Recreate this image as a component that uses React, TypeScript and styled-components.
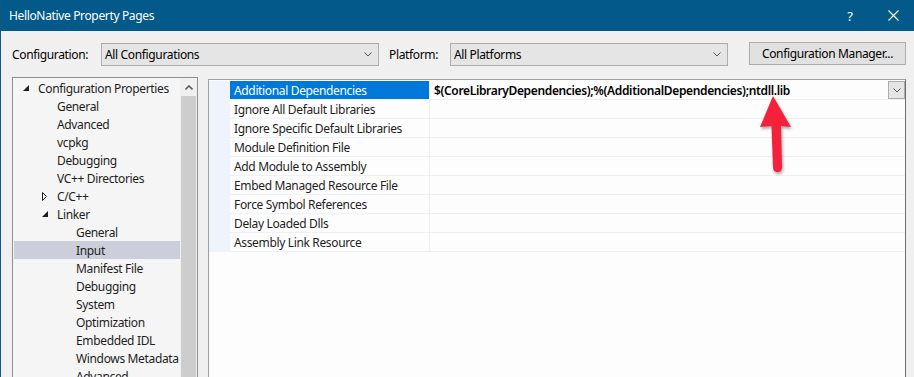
import styled, { createGlobalStyle } from 'styled-components'

const GlobalStyle = createGlobalStyle`
  body {
    margin: 0;
    background: #f0f0f0;
  }
`

type TreeItem = {
  label: string
  level: number
  expander?: 'open' | 'closed'
  selected?: boolean
}

const treeItems: TreeItem[] = [
  { label: 'Configuration Properties', level: 0, expander: 'open' },
  { label: 'General', level: 1 },
  { label: 'Advanced', level: 1 },
  { label: 'vcpkg', level: 1 },
  { label: 'Debugging', level: 1 },
  { label: 'VC++ Directories', level: 1 },
  { label: 'C/C++', level: 1, expander: 'closed' },
  { label: 'Linker', level: 1, expander: 'open' },
  { label: 'General', level: 2 },
  { label: 'Input', level: 2, selected: true },
  { label: 'Manifest File', level: 2 },
  { label: 'Debugging', level: 2 },
  { label: 'System', level: 2 },
  { label: 'Optimization', level: 2 },
  { label: 'Embedded IDL', level: 2 },
  { label: 'Windows Metadata', level: 2 },
  { label: 'Advanced', level: 2 },
]

const properties = [
  'Additional Dependencies',
  'Ignore All Default Libraries',
  'Ignore Specific Default Libraries',
  'Module Definition File',
  'Add Module to Assembly',
  'Embed Managed Resource File',
  'Force Symbol References',
  'Delay Loaded Dlls',
  'Assembly Link Resource',
]

const Chevron = ({ up }: { up?: boolean }) => (
  <svg width="8" height="5" viewBox="0 0 8 5">
    <path
      d={up ? 'M0.5 4.5 L4 1 L7.5 4.5' : 'M0.5 0.5 L4 4 L7.5 0.5'}
      fill="none"
      stroke={up ? '#606060' : '#555'}
      strokeWidth={up ? 1.6 : 1}
    />
  </svg>
)

const Expander = ({ kind }: { kind: 'open' | 'closed' }) =>
  kind === 'open' ? (
    <svg width="6" height="6" viewBox="0 0 6 6">
      <path d="M0 6 L6 6 L6 0 Z" fill="#1e1e1e" />
    </svg>
  ) : (
    <svg width="5" height="9" viewBox="0 0 5 9">
      <path d="M0.5 0.5 L4.5 4.5 L0.5 8.5 Z" fill="none" stroke="#1e1e1e" />
    </svg>
  )

const RedArrow = () => (
  <ArrowSvg width="50" height="92" viewBox="0 0 50 92">
    <path
      d="M23 7 L41 38 L31 37 L32 78 Q32 83 27.5 83 Q23 83 23 78 L21.5 37 L10 38 Z"
      fill="#f5213b"
    />
  </ArrowSvg>
)

export default function App() {
  return (
    <>
      <GlobalStyle />
      <Window>
        <TitleBar>
          <Title>HelloNative Property Pages</Title>
          <CaptionButton $width={44}>?</CaptionButton>
          <CaptionButton $width={42}>
            <svg width="11" height="11" viewBox="0 0 11 11">
              <path d="M0.5 0.5 L10.5 10.5 M10.5 0.5 L0.5 10.5" stroke="#fff" strokeWidth="1.1" />
            </svg>
          </CaptionButton>
        </TitleBar>

        <Toolbar>
          <FieldLabel $width={89}>Configuration:</FieldLabel>
          <Combo>
            <span>All Configurations</span>
            <Chevron />
          </Combo>
          <FieldLabel $width={61} $gap={10}>Platform:</FieldLabel>
          <Combo>
            <span>All Platforms</span>
            <Chevron />
          </Combo>
          <ManagerButton>Configuration Manager...</ManagerButton>
        </Toolbar>

        <Content>
          <TreePanel>
            <TreeList>
              {treeItems.map((item, i) => (
                <TreeRow key={i} $level={item.level} $selected={item.selected}>
                  <ExpanderSlot>{item.expander && <Expander kind={item.expander} />}</ExpanderSlot>
                  {item.label}
                </TreeRow>
              ))}
            </TreeList>
            <ScrollBar>
              <ScrollArrow>
                <Chevron up />
              </ScrollArrow>
              <ScrollThumb />
            </ScrollBar>
          </TreePanel>

          <Grid>
            {properties.map((name, i) => (
              <GridRow key={name}>
                <Gutter />
                <NameCell $selected={i === 0}>{name}</NameCell>
                <ValueCell>
                  {i === 0 && (
                    <>
                      <span>$(CoreLibraryDependencies);%(AdditionalDependencies);ntdll.lib</span>
                      <DropButton>
                        <Chevron />
                      </DropButton>
                    </>
                  )}
                </ValueCell>
              </GridRow>
            ))}
            <RedArrow />
          </Grid>
        </Content>
      </Window>
    </>
  )
}

const Window = styled.div`
  width: 914px;
  height: 377px;
  overflow: hidden;
  box-sizing: border-box;
  background: #f0f0f0;
  border-left: 1px solid #0f5784;
  display: flex;
  flex-direction: column;
  font-family: 'Noto Sans', 'Open Sans', sans-serif;
  font-size: 12px;
  letter-spacing: -0.35px;
  color: #000;
`

const TitleBar = styled.div`
  height: 31px;
  flex-shrink: 0;
  display: flex;
  align-items: center;
  padding-left: 8px;
  background: #02598a;
  color: #fff;
`

const Title = styled.div`
  flex: 1;
`

const CaptionButton = styled.div<{ $width: number }>`
  width: ${(p) => p.$width}px;
  height: 31px;
  display: flex;
  align-items: center;
  justify-content: center;
  font-size: 13px;
`

const Toolbar = styled.div`
  display: flex;
  align-items: center;
  margin-top: 12px;
  height: 23px;
  padding: 0 8px 0 11px;
  flex-shrink: 0;
`

const FieldLabel = styled.div<{ $width: number; $gap?: number }>`
  width: ${(p) => p.$width}px;
  margin-left: ${(p) => p.$gap ?? 0}px;
`

const Combo = styled.div`
  width: 278px;
  height: 23px;
  box-sizing: border-box;
  display: flex;
  align-items: center;
  justify-content: space-between;
  padding: 0 6px 0 3px;
  background: #e5e5e5;
  border: 1px solid #adadad;
`

const ManagerButton = styled.div`
  margin-left: auto;
  margin-bottom: 2px;
  width: 157px;
  height: 23px;
  box-sizing: border-box;
  display: flex;
  align-items: center;
  justify-content: center;
  background: #e1e1e1;
  border: 1px solid #adadad;
`

const Content = styled.div`
  display: flex;
  align-items: flex-start;
  gap: 10px;
  margin-top: 11px;
  padding-left: 11px;
  height: 330px;
  flex-shrink: 0;
`

const TreePanel = styled.div`
  width: 186px;
  height: 330px;
  box-sizing: border-box;
  display: flex;
  border: 1px solid #8f8f8f;
  background: #f5f5f5;
`

const TreeList = styled.div`
  flex: 1;
  padding: 1px 0 0 1px;
  overflow: hidden;
`

const TreeRow = styled.div<{ $level: number; $selected?: boolean }>`
  height: 18px;
  display: flex;
  align-items: center;
  white-space: nowrap;
  padding-left: ${(p) => 5 + p.$level * 19}px;
  background: ${(p) => (p.$selected ? '#cccedb' : 'transparent')};
  color: #1e1e1e;
`

const ExpanderSlot = styled.div`
  width: 19px;
  flex-shrink: 0;
  display: flex;
  align-items: center;
  padding-left: 4px;
  box-sizing: border-box;
`

const ScrollBar = styled.div`
  width: 17px;
  display: flex;
  flex-direction: column;
  background: #f0f0f0;
`

const ScrollArrow = styled.div`
  height: 18px;
  display: flex;
  align-items: center;
  justify-content: center;
`

const ScrollThumb = styled.div`
  flex: 1;
  margin: 0 1px;
  background: #cdcdcd;
`

const Grid = styled.div`
  position: relative;
  width: 698px;
  height: 330px;
  margin-top: 2px;
  box-sizing: border-box;
  padding-top: 1px;
  border: 1px solid #a0a0a0;
  border-right-color: #6d6d6d;
  background: #fdfdfd;
`

const GridRow = styled.div`
  display: flex;
  height: 19px;
`

const Gutter = styled.div`
  width: 21px;
  background: #eef3fc;
`

const NameCell = styled.div<{ $selected?: boolean }>`
  width: 200px;
  box-sizing: border-box;
  display: flex;
  align-items: center;
  padding-left: 4px;
  white-space: nowrap;
  border-bottom: 1px solid #edf0f6;
  border-right: 1px solid #f0f0f0;
  background: ${(p) => (p.$selected ? '#0078d7' : 'transparent')};
  color: ${(p) => (p.$selected ? '#fff' : '#1e1e1e')};
`

const ValueCell = styled.div`
  flex: 1;
  display: flex;
  align-items: center;
  justify-content: space-between;
  padding-left: 4px;
  border-bottom: 1px solid #edf0f6;
  font-weight: 600;
  white-space: nowrap;
`

const DropButton = styled.div`
  width: 17px;
  height: 18px;
  box-sizing: border-box;
  display: flex;
  align-items: center;
  justify-content: center;
  background: #e5e5e5;
  border: 1px solid #adadad;
`

const ArrowSvg = styled.svg`
  position: absolute;
  left: 541px;
  top: 9px;
  filter: drop-shadow(1px 2px 1.5px rgba(0, 0, 0, 0.35));
`
